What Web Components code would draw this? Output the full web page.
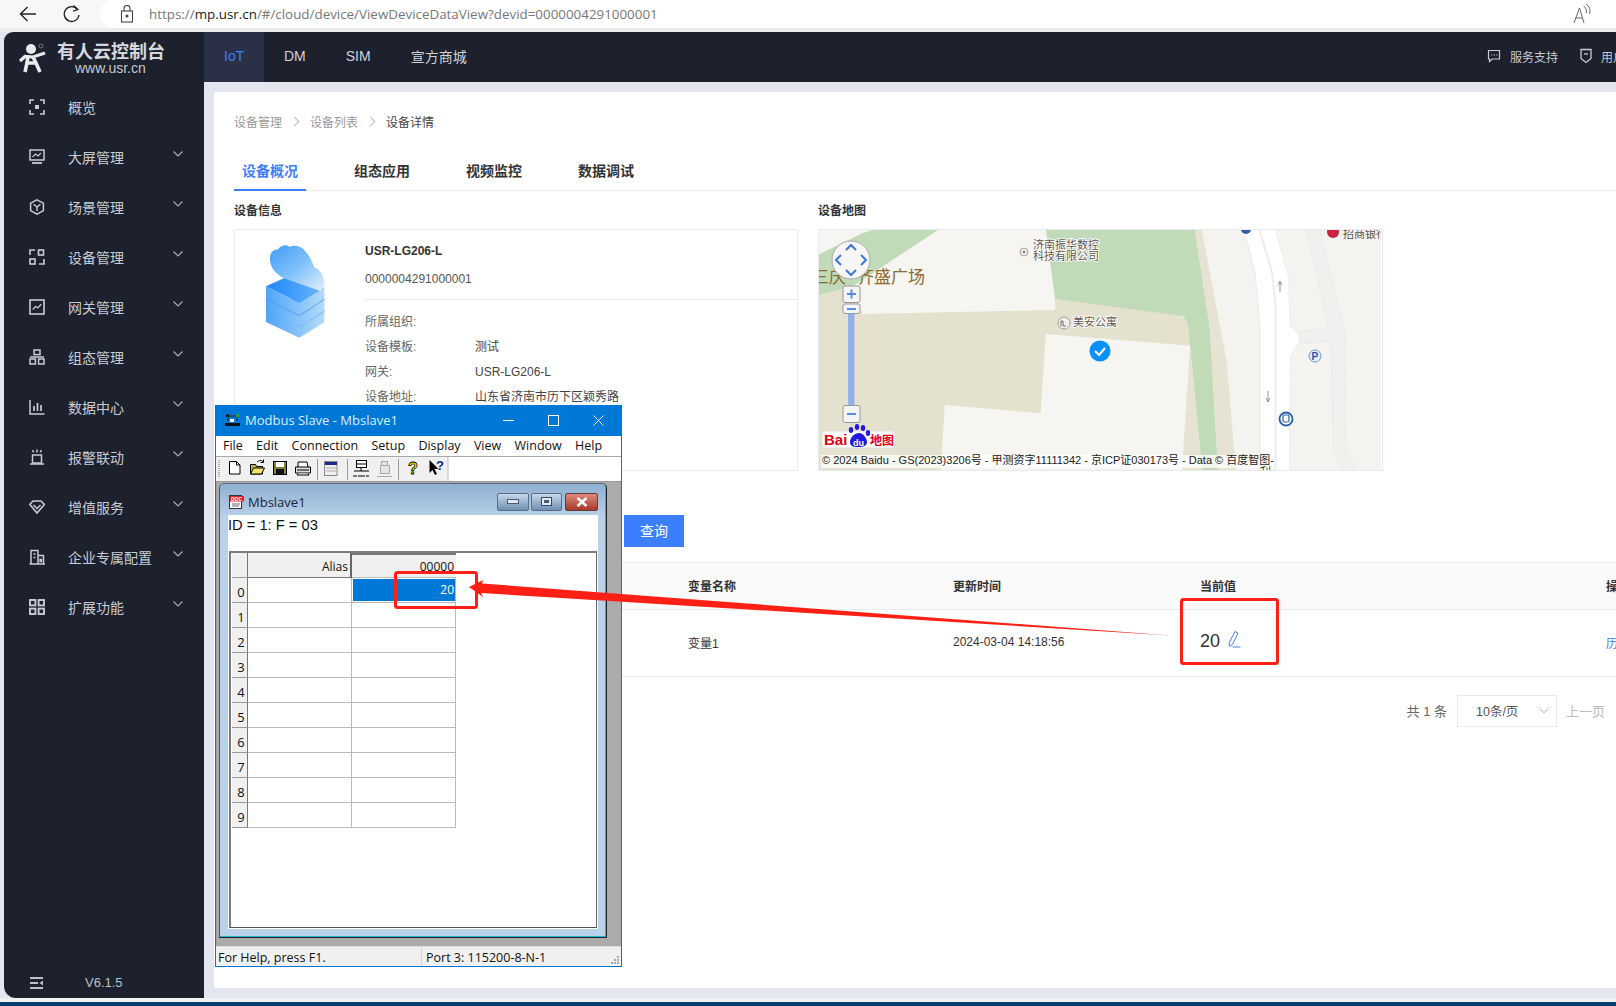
<!DOCTYPE html>
<html lang="zh"><head><meta charset="utf-8"><title>设备详情</title>
<style>
html,body{margin:0;padding:0;width:1616px;height:1006px;overflow:hidden;background:#e3e6ee;font-family:"Liberation Sans","Noto Sans CJK SC",sans-serif;font-size:12px;color:#333}
body{position:relative;display:flex;flex-direction:column}
</style></head><body>
<browser-bar></browser-bar>
<app-shell>
  <side-nav slot="nav">
    <nav-item icon="scan">概览</nav-item>
    <nav-item icon="screen" more>大屏管理</nav-item>
    <nav-item icon="hex" more>场景管理</nav-item>
    <nav-item icon="quad" more>设备管理</nav-item>
    <nav-item icon="gate" more>网关管理</nav-item>
    <nav-item icon="tree" more>组态管理</nav-item>
    <nav-item icon="bars" more>数据中心</nav-item>
    <nav-item icon="siren" more>报警联动</nav-item>
    <nav-item icon="gem" more>增值服务</nav-item>
    <nav-item icon="build" more>企业专属配置</nav-item>
    <nav-item icon="apps" more>扩展功能</nav-item>
  </side-nav>
  <top-bar slot="top"></top-bar>
  <device-panel slot="main"></device-panel>
</app-shell>
<bottom-strip></bottom-strip>
<modbus-window></modbus-window>
<annotation-layer></annotation-layer>
<script>
function shadow(el,html){el.attachShadow({mode:'open'}).innerHTML=html;}
const ICONS={
scan:'<path d="M1 5V1h4M11 1h4v4M15 11v4h-4M5 15H1v-4" fill="none" stroke="currentColor" stroke-width="1.6"/><rect x="6" y="6" width="4" height="4" fill="currentColor"/>',
screen:'<rect x="1" y="1" width="14" height="10" fill="none" stroke="currentColor" stroke-width="1.5"/><path d="M3.5 8l3-3 2.5 2 3-3" fill="none" stroke="currentColor" stroke-width="1.1"/><path d="M3 14h10" stroke="currentColor" stroke-width="1.8"/>',
hex:'<path d="M8 .8l6.4 3.4v7.4L8 15.2 1.6 11.6V4.2z" fill="none" stroke="currentColor" stroke-width="1.5"/><path d="M4.6 5.2L8 8l3.4-2.8M8 8v4" fill="none" stroke="currentColor" stroke-width="1.4"/>',
quad:'<path d="M6 1H1v5" fill="none" stroke="currentColor" stroke-width="1.6"/><rect x="9.5" y="1" width="5" height="5" fill="none" stroke="currentColor" stroke-width="1.6"/><rect x="1" y="10" width="5" height="5" fill="none" stroke="currentColor" stroke-width="1.6"/><path d="M15 10v5h-5" fill="none" stroke="currentColor" stroke-width="1.6"/>',
gate:'<rect x="1" y="1" width="14" height="14" fill="none" stroke="currentColor" stroke-width="1.6"/><path d="M3.8 10.5l3-3.2 2 1.6 3.400-3.600" fill="none" stroke="currentColor" stroke-width="1.3"/>',
tree:'<rect x="5" y="1" width="6" height="4.6" fill="none" stroke="currentColor" stroke-width="1.5"/><rect x="1" y="10" width="5.4" height="5" fill="none" stroke="currentColor" stroke-width="1.5"/><rect x="9.6" y="10" width="5.4" height="5" fill="none" stroke="currentColor" stroke-width="1.5"/><path d="M1 8h14" stroke="currentColor" stroke-width="1.5"/>',
bars:'<path d="M1 1v14h14.5" fill="none" stroke="currentColor" stroke-width="1.5"/><path d="M5 7v5M8.5 4v8M12 6v6" stroke="currentColor" stroke-width="1.7"/>',
siren:'<rect x="3.5" y="6" width="9" height="8" fill="none" stroke="currentColor" stroke-width="1.5"/><path d="M1 15h14M8 .5v3M3.500 1l1.200 2.400M12.500 1l-1.200 2.400" fill="none" stroke="currentColor" stroke-width="1.5"/>',
gem:'<path d="M.8 5.500L4 2h8l3.400 3.500L8 14z" fill="none" stroke="currentColor" stroke-width="1.6"/><path d="M4.500 6L8 9.500 11.500 6" fill="none" stroke="currentColor" stroke-width="1.5"/>',
build:'<path d="M2 15V1.500h7V15M9 6.500h5.500V15M0.500 15h16" fill="none" stroke="currentColor" stroke-width="1.5"/><path d="M4.500 5h2M4.500 8.500h2M11 10.500h1.500v2H11z" fill="none" stroke="currentColor" stroke-width="1.3"/>',
apps:'<g fill="none" stroke="currentColor" stroke-width="1.9"><rect x="1" y="1" width="5.400" height="5.400"/><rect x="9.600" y="1" width="5.400" height="5.400"/><rect x="1" y="9.600" width="5.400" height="5.400"/><rect x="9.600" y="9.600" width="5.400" height="5.400"/></g>'
};
customElements.define('browser-bar',class extends HTMLElement{constructor(){super();shadow(this,`<style>
:host{display:flex;height:32px;box-sizing:border-box;border-bottom:4px solid #ececec;background:#f7f7f7;align-items:center;flex:none}
.nav{width:100px;display:flex;flex:none;padding-left:18px;box-sizing:border-box;gap:22px;color:#333}
svg{display:block}
.url{flex:1;height:28px;background:#fff;border-radius:14px 0 0 14px;display:flex;align-items:center;font:13.380px "Open Sans",sans-serif;color:#777;padding-left:20px;white-space:nowrap;box-sizing:border-box}
.url b{font-weight:400;color:#222}.url svg{margin-right:15px}
.a{position:relative;margin-left:auto;margin-right:24px !important}
</style><div class="nav">
<svg width="20" height="20" viewBox="0 0 20 20" fill="none" stroke="#222" stroke-width="1.4"><path d="M18 10H2.500M9.500 3l-7 7 7 7"/></svg>
<svg width="20" height="20" viewBox="0 0 20 20" fill="none" stroke="#222" stroke-width="1.3" style="margin-left:2px"><path d="M15.500 5.500A7.400 7.400 0 1 0 17 11"/><path d="M11.500 1.500l4.300 4-4.600 1.600" /></svg></div>
<div class="url"><svg width="14" height="18" viewBox="0 0 14 18" fill="none" stroke="#444" stroke-width="1.1"><rect x="1.500" y="6" width="11" height="11"/><path d="M4 6V3.500a3 3 0 0 1 6 0V6"/><circle cx="7" cy="11" r="1" fill="#444"/></svg><span>https://<b>mp.usr.cn</b>/#/cloud/device/ViewDeviceDataView?devid=0000004291000001</span>
<svg class="a" width="20" height="22" viewBox="0 0 20 22" fill="none" stroke="#666" stroke-width="1"><path d="M2 20L7.500 5 12 20M3.800 15h6.500"/><path d="M11.500 3c2.400 1.400 3.400 4 2.700 7M14 1c3.500 2.200 4.600 6 3.600 10"/></svg></div>`)}});

customElements.define('app-shell',class extends HTMLElement{constructor(){super();shadow(this,`<style>
:host{display:grid;flex:1;min-height:0;margin-left:4px;grid-template-columns:200px 1fr;grid-template-rows:50px 1fr;overflow:hidden}
.nav{grid-row:1/3;min-height:0;display:flex}.top{display:flex;min-width:0}.main{min-width:0;min-height:0;padding:10px 0 10px 10px;display:flex;overflow:hidden}
::slotted(*){flex:1;min-width:0}
</style><div class="nav"><slot name="nav"></slot></div><div class="top"><slot name="top"></slot></div><div class="main"><slot name="main"></slot></div>`)}});

customElements.define('side-nav',class extends HTMLElement{constructor(){super();shadow(this,`<style>
:host{display:flex;flex-direction:column;background:#1c212d;border-radius:9px 0 0 12px;color:#c6cad3;position:relative}
.logo{height:50px;display:flex;position:relative;flex:none}
.t{position:absolute;left:53px;top:9px;font-size:18px;font-weight:700;line-height:22px;color:#d5d8de;white-space:nowrap}
.u{position:absolute;left:71px;top:29px;font-size:14px;line-height:15px;color:#c6cad3;white-space:nowrap}
svg.man{position:absolute;left:14px;top:7px}
.foot{margin-top:auto;height:31px;display:flex;align-items:center;position:relative;color:#bcc0c9;font-size:13px}
.foot svg{margin-left:26px}.foot span{margin-left:42px}
.items{display:flex;flex-direction:column;}
</style><div class="logo"><svg class="man" width="36" height="36" viewBox="0 0 36 36"><circle cx="13" cy="10" r="5" fill="#e8eaee"/><path d="M2 22l5-4.500 8 .5 12-4" fill="none" stroke="#e8eaee" stroke-width="3.200"/><path d="M10 17l-1 7-2 9M15 18l3 6 4 9M8 24h10" fill="none" stroke="#e8eaee" stroke-width="3.600"/><circle cx="23" cy="7" r="2" fill="none" stroke="#aaa" stroke-width=".6"/></svg>
<div class="t">有人云控制台</div><div class="u">www.usr.cn</div></div>
<div class="items"><slot></slot></div>
<div class="foot"><svg width="13" height="12" viewBox="0 0 13 12" fill="#bcc0c9"><rect width="13" height="2"/><rect y="5" width="8" height="2"/><rect y="10" width="13" height="2"/><path d="M13 3.500v5L9.500 6z"/></svg><span>V6.1.5</span></div>`)}});

customElements.define('nav-item',class extends HTMLElement{constructor(){super();
const ic=ICONS[this.getAttribute('icon')]||'';const more=this.hasAttribute('more');
shadow(this,`<style>
:host{display:flex;height:50px;align-items:center;font-size:14px;color:#c9ccd4;position:relative}
.i{margin-left:25px;width:16px;height:16px;display:block;color:#c9ccd4;flex:none}
.l{margin-left:23px;flex:1;white-space:nowrap}
.c{width:12px;height:8px;margin-right:20px;margin-top:-6px;flex:none}
</style><svg class="i" viewBox="0 0 16 16">${ic}</svg><div class="l"><slot></slot></div>${more?'<svg class="c" viewBox="0 0 12 8" fill="none" stroke="#aab0bb" stroke-width="1.1"><path d="M1.500 1.500L6 6l4.500-4.500"/></svg>':''}`)}});

customElements.define('top-bar',class extends HTMLElement{constructor(){super();shadow(this,`<style>
:host{display:flex;background:#1c212d;color:#d0d3da;font-size:14px;align-items:stretch;white-space:nowrap;overflow:hidden}
.t{display:flex;align-items:center;padding:0 20px 2px 20px}.t.on{background:#2a3146;color:#3d7eff;width:60px;box-sizing:border-box;flex:none}
.r{margin-left:auto;display:flex;align-items:center;font-size:12px;color:#c9ccd4;width:129px;flex:none;padding-bottom:2px;box-sizing:border-box}
.r svg{display:block;flex:none}
</style><div class="t on">IoT</div><div class="t">DM</div><div class="t">SIM</div><div class="t">宣方商城</div>
<div class="r"><svg width="14" height="14" viewBox="0 0 14 14" fill="none" stroke="#c9ccd4" stroke-width="1.2"><path d="M1.500 1.500h11v8.500H5L2.500 12.500V10h-1z"/><path d="M4.500 6h.8M7 6h.8M9.500 6h.8" stroke-width="1.300"/></svg><span style="margin-left:9px">服务支持</span><svg style="margin-left:21px" width="14" height="16" viewBox="0 0 14 16" fill="none" stroke="#c9ccd4" stroke-width="1.300"><path d="M2 1.500h10v9L7 14.500 2 10.500z"/><path d="M5 6h4"/></svg><span style="margin-left:8px">用户中心</span></div>`)}});

customElements.define('device-panel',class extends HTMLElement{constructor(){super();shadow(this,`<style>
:host{display:flex;flex-direction:column;background:#fff;padding:21px 0 0 20px;font-size:12px;color:#333;min-width:0;overflow:hidden;box-sizing:border-box}
.crumb{display:flex;align-items:center;height:16px;color:#9a9a9a;flex:none;white-space:nowrap}
.crumb i{width:6px;height:6px;border:solid #bbb;border-width:1px 1px 0 0;transform:rotate(45deg);margin:0 12px 0 9px;display:block}
.crumb b{font-weight:400;color:#444}
.tabs{display:flex;height:39px;margin-top:23px;box-sizing:border-box;border-bottom:1px solid #e8eaf0;font-size:14px;font-weight:700;color:#333;flex:none}
.tabs span{line-height:38px;white-space:nowrap;box-sizing:border-box}
.tabs span.on{padding:0 8px;color:#3d7eff;border-bottom:2px solid #3d7eff;margin-right:48px;height:39px;width:72px}
.tabs span:not(.on){margin-right:56px}
.cols{display:grid;grid-template-columns:564px 564px;column-gap:21px;margin-top:11px;flex:none}
h4{margin:0 0 10px;padding-top:1px;font-size:12px;line-height:16px;font-weight:700;color:#333}
.query{margin:44px 0 0 390px;width:60px;height:32px;padding-bottom:2px;box-sizing:border-box;background:#3d7eff;color:#fff;display:flex;align-items:center;justify-content:center;font-size:14px;flex:none}
</style>
<div class="crumb"><span>设备管理</span><i></i><span>设备列表</span><i></i><b>设备详情</b></div>
<div class="tabs"><span class="on">设备概况</span><span>组态应用</span><span>视频监控</span><span>数据调试</span></div>
<div class="cols"><div><h4>设备信息</h4><info-card></info-card></div><div style="margin-left:-1px"><h4>设备地图</h4><map-card></map-card></div></div>
<div class="query">查询</div>
<var-table></var-table>`)}});

customElements.define('info-card',class extends HTMLElement{constructor(){super();shadow(this,`<style>
:host{display:flex;height:242px;box-sizing:border-box;border:1px solid #e8eaf0;border-right:1px solid #e8eaf0;font-size:12px;color:#555;overflow:hidden}
.pic{width:130px;flex:none;padding:9px 0 0 21px;box-sizing:border-box}.pic svg{display:block}
.b{flex:1;display:flex;flex-direction:column}
.n{font-weight:700;color:#333;margin-top:13px;line-height:16px}
.s{margin-top:12px;line-height:16px;padding-bottom:12px;border-bottom:1px solid #e8eaf0}
.r{display:flex;line-height:16px;margin-top:9px;color:#666}.s + .r{margin-top:14px}.r span{width:110px}.r em{font-style:normal;color:#444}
</style><div class="pic"><svg width="80" height="100" viewBox="0 0 240 300"><defs>
<linearGradient id="c" x1="0" y1="0" x2="1" y2="1"><stop offset="0" stop-color="#3f9cf5"/><stop offset=".5" stop-color="#7fc0fa"/><stop offset="1" stop-color="#e3f1fd"/></linearGradient>
<linearGradient id="t" x1="0" y1="0" x2="1" y2="0"><stop offset="0" stop-color="#1f86fb"/><stop offset="1" stop-color="#6ab8fb"/></linearGradient>
<linearGradient id="l" x1="0" y1="0" x2="1" y2="0"><stop offset="0" stop-color="#4fa5f7"/><stop offset=".55" stop-color="#86c2fa"/><stop offset="1" stop-color="#b5dafc"/></linearGradient></defs>
<path d="M30 215v34l100 47 75-46v-35z" fill="url(#l)"/><path d="M30 215l100 47 75-47" fill="none" stroke="#3f95f2" stroke-width="4"/>
<path d="M30 180v36l100 48 75-48v-36z" fill="url(#l)"/><path d="M30 180l100 49 75-49" fill="none" stroke="#3f95f2" stroke-width="4"/>
<path d="M30 142v38l100 49 75-49v-33L130 192z" fill="url(#l)"/>
<path d="M30 142L112 105 205 147 130 192z" fill="url(#t)"/>
<path d="M84 118C60 105 40 85 42 55 44 35 58 30 66 32 72 20 90 14 102 24 116 14 142 24 150 40 165 55 170 75 176 86 195 90 208 120 205 142L193 156z" fill="url(#c)"/>
<g fill="#5fe08f"><circle cx="135" cy="205" r="2"/><circle cx="151" cy="196" r="2"/><circle cx="135" cy="237" r="2"/><circle cx="135" cy="271" r="2"/><circle cx="151" cy="263" r="2"/></g></svg></div>
<div class="b"><div class="n">USR-LG206-L</div><div class="s">0000004291000001</div>
<div class="r"><span>所属组织:</span><em></em></div><div class="r"><span>设备模板:</span><em>测试</em></div><div class="r"><span>网关:</span><em>USR-LG206-L</em></div><div class="r"><span>设备地址:</span><em>山东省济南市历下区颖秀路</em></div></div>`)}});

customElements.define('map-card',class extends HTMLElement{constructor(){super();shadow(this,`<style>
:host{display:block;height:242px;box-sizing:border-box;border:1px solid #e8eaf0;overflow:hidden}
svg{display:block}
text{font-family:"Liberation Sans","Noto Sans CJK SC",sans-serif}
.h{paint-order:stroke;stroke:#fff;stroke-width:1.600px}
</style><svg width="562" height="240" viewBox="819 230 562 240">
<rect x="819" y="230" width="564" height="240" fill="#f6f5f1"/>
<g transform="translate(800 0) scale(.5208 .3333)">
<path d="M36 885L100 860 120 942 490 930 490 897 725 940 745 965 750 1037 472 1002 462 1240 278 1215 270 1410 30 1410 30 885z" fill="#e4e1cf"/>
<path d="M30 768L120 700 140 690 265 690 100 860 30 888z" fill="#c1dbb8"/>
</g>
<path d="M1046 230H1195L1210 329 1218 470H1202L1190 346 1188 324 1183 316 1055 299z" fill="#c1dbb8"/>
<path d="M1195 230H1202L1227 362 1236 470H1218L1210 329z" fill="#e6e3d2"/>
<path d="M1190 346L1202 470H1182z" fill="#e6e3d2"/>
<path d="M1202 230H1382V470H1236L1227 362z" fill="#f4f3ef"/>
<g transform="translate(1160 229) scale(.3333)">
<path d="M440 0H478L555 310 558 660 590 725H550L520 665 515 355 500 338 418 345 415 310 505 295z" fill="#f0f0ef" stroke="#e6e6e4" stroke-width="2"/>
<path d="M252 0H295L335 130 345 230V726H300V290L285 130z" fill="#fff" stroke="#e4e4e2" stroke-width="2"/>
<path d="M300 0H345L385 140 390 290 418 318V340L392 380 388 726H348V230L338 130z" fill="#fff" stroke="#e8e8e6" stroke-width="2"/>
</g>
<path d="M1280 281v11M1278 285l2-4 2 4" stroke="#888" fill="none" stroke-width=".9"/>
<path d="M1268 391v11M1266 398l2 4 2-4" stroke="#888" fill="none" stroke-width=".9"/>
<text x="812" y="283" font-size="17" fill="#8a6a2e">三庆</text><text x="857" y="283" font-size="17" fill="#8a6a2e">齐盛广场</text>
<circle cx="1024" cy="252" r="4" fill="#eee" stroke="#a89e96"/><circle cx="1024" cy="252" r="1.300" fill="#8a7a70"/>
<text class="h" x="1033" y="249" font-size="11" fill="#5f5450">济南振华数控</text><text class="h" x="1033" y="260" font-size="11" fill="#5f5450">科技有限公司</text>
<circle cx="1064" cy="323" r="6" fill="#eee" stroke="#a89e96"/><path d="M1061 326v-5h2v5h3" fill="none" stroke="#7e6a66"/><text class="h" x="1073" y="326" font-size="11" fill="#5f5450">美安公寓</text>
<circle cx="1100" cy="351" r="10.500" fill="#0a90fb"/><path d="M1095 351l4 4 6-7" fill="none" stroke="#fff" stroke-width="2"/>
<circle cx="1315" cy="356" r="6" fill="#e6edf8" stroke="#6f96cc"/><text x="1311.500" y="360" font-size="10" font-weight="700" fill="#1f56a5">P</text>
<circle cx="1286" cy="419" r="6.500" fill="#fff" stroke="#2a5fa8" stroke-width="1.800"/><rect x="1283" y="415" width="6" height="7" rx="1.500" fill="none" stroke="#2a5fa8" stroke-width="1.200"/>
<circle cx="1333" cy="232" r="6" fill="#c8233f"/><text x="1343" y="238" font-size="11" fill="#5f5450">招商银行</text><circle cx="1246" cy="229" r="5" fill="#2a5fa8"/>
<rect x="821" y="455" width="453" height="13" fill="#fff" opacity=".75"/>
<text x="822" y="464" font-size="11" fill="#222">© 2024 Baidu - GS(2023)3206号 - 甲测资字11111342 - 京ICP证030173号 - Data © 百度智图-</text>
<text x="1260" y="476" font-size="11" fill="#222">利</text>
<circle cx="851" cy="260" r="19" fill="#f6f6f6" stroke="#aaa"/>
<g fill="none" stroke="#3f78dd" stroke-width="2"><path d="M846 250l5-5 5 5M846 270l5 5 5-5M841 255l-5 5 5 5M861 255l5 5-5 5"/></g>
<g fill="#f4f4f4" stroke="#999"><rect x="843" y="286" width="17" height="16.500" rx="2"/><rect x="843" y="304" width="17" height="9.500" rx="2"/></g>
<rect x="848.500" y="313.500" width="5.500" height="92" fill="#8fb2ee" stroke="#7a9de0" stroke-width=".5"/>
<rect x="843" y="405.500" width="17" height="17" rx="2" fill="#f4f4f4" stroke="#999"/>
<path d="M847 294h9M851.500 289.500v9M847 309h9M847 414h9" stroke="#5a8ae8" stroke-width="2"/>
<rect x="822" y="431" width="73" height="17" rx="3" fill="#fff" stroke="#ddd"/>
<text x="824" y="445" font-size="15" font-weight="700" fill="#e60012">Bai</text>
<g fill="#2319dc"><ellipse cx="851" cy="430" rx="2.200" ry="3"/><ellipse cx="857" cy="427" rx="2.200" ry="3"/><ellipse cx="863" cy="428" rx="2.200" ry="3"/><ellipse cx="868" cy="433" rx="2.200" ry="3"/><path d="M859 433c4 0 8 5 8 9s-4 5-8 5-9 0-9-5 5-9 9-9z"/></g>
<text x="853" y="446" font-size="9" font-weight="700" fill="#fff">du</text>
<text x="870" y="445" font-size="12" font-weight="700" fill="#e60012">地图</text>
</svg>`)}});

customElements.define('var-table',class extends HTMLElement{constructor(){super();shadow(this,`<style>
:host{display:block;margin-top:15px;width:1382px;font-size:12px;flex:none}
.g{display:grid;grid-template-columns:454px 265px 247px 406px 10px;white-space:nowrap;overflow:hidden}
.h,.d{display:flex;align-items:center;box-sizing:border-box}
.h{height:48px;background:#fafafa;border-top:1px solid #e8eaf0;border-bottom:1px solid #e8eaf0;font-weight:700;color:#333;padding-bottom:2px}
.d{height:67px;border-bottom:1px solid #e8eaf0;color:#333;padding-bottom:2px}
.v{font-size:18px;margin-top:-2px}.v svg{margin-left:6px;vertical-align:-1px}
.a{color:#3d7eff}
.page{display:flex;justify-content:flex-end;align-items:center;margin-top:18px;padding-right:11px;height:32px;white-space:nowrap;font-size:13px;color:#666}
.page > span{margin-top:-2px}
.sel{width:100px;height:32px;border:1px solid #e8eaf0;box-sizing:border-box;margin:0 9px 0 10px;display:flex;align-items:center;padding:0 0 1px 18px;font-size:12.500px;position:relative;color:#555}
.sel svg{position:absolute;right:7px;top:12px}
.pv{color:#bbb;font-size:13px}
</style><div class="g"><div class="h"></div><div class="h">变量名称</div><div class="h">更新时间</div><div class="h">当前值</div><div class="h">操作</div>
<div class="d"></div><div class="d">变量1</div><div class="d">2024-03-04 14:18:56</div><div class="d"><span class="v">20<svg width="16" height="17" viewBox="0 0 16 17" fill="none" stroke="#4a7ef5" stroke-width="1"><path d="M9 .5l3 1.500-5.500 11.500-3 2-.5-3.500zM6.500 16h8"/></svg></span></div><div class="d a">历史</div></div>
<div class="page"><span>共 1 条</span><div class="sel">10条/页<svg width="10" height="6" viewBox="0 0 10 6" fill="none" stroke="#bbb"><path d="M1 1l4 4 4-4"/></svg></div><span class="pv">上一页</span></div>`)}});

customElements.define('modbus-window',class extends HTMLElement{constructor(){super();
const F='"Open Sans","Noto Sans",sans-serif';
let cells='<div class="c rh"></div><div class="c rh al">Alias</div><div class="c rh n">00000</div>';
for(let i=0;i<10;i++){cells+=`<div class="c rh num">${i}</div><div class="c"></div><div class="c v">${i==0?'<span class="sel">20</span>':''}</div>`;}
shadow(this,`<style>
:host{position:absolute;left:215px;top:405px;width:407px;height:562px;box-sizing:border-box;border:1px solid #0078d7;background:#f0f0f0;display:flex;flex-direction:column;font:12px ${F};color:#111;z-index:5}
.title{height:30px;padding-bottom:2px;box-sizing:border-box;flex:none;background:#0078d7;color:#dceeff;display:flex;align-items:center;padding-left:9px;font-size:13px;white-space:nowrap}
.title svg{display:block}.title span{margin-left:5px;flex:1}
.title .b{width:45px;height:30px;display:flex;align-items:center;justify-content:center}
.menu{flex:none;background:#fff;display:flex;align-items:center;font-size:12.500px;padding:0 0 2px 7px;box-sizing:content-box;height:18px;gap:13.300px;border-bottom:1px solid #a8a8a8;white-space:nowrap}
.tool{height:24px;flex:none;background:#fff;border-bottom:1px solid #9a9a9a}
.tool svg{display:block}
.mdi{flex:1;background:#ababab;padding:1px 14px 8px 2px;min-height:0;display:flex;border-left:1px solid #a0a0a0}
.child{flex:1;min-width:0;box-sizing:border-box;border:1px solid #222;border-top-color:#5d6c7c;border-radius:5px 5px 0 0;border-left-color:#555;background:#b9d1ea;box-shadow:inset -1px -1px 0 #1fb6d6;display:flex;flex-direction:column;padding:0 8px 8px 8px;background-image:linear-gradient(#8fb0d2,#bad1ea 34px)}
.ct{height:31px;flex:none;display:flex;align-items:center;padding:5px 0 0 1px;box-sizing:border-box;color:#15263a;font-size:13px}
.ct span{margin-left:3px;flex:1}.ct svg{display:block}
.btn{height:18px;border:1px solid #5a6e86;border-radius:2px;background:linear-gradient(#c6d8ec,#6f8fb3);display:flex;align-items:center;justify-content:center;box-sizing:border-box;flex:none}
.client{flex:1;background:#fff;display:flex;flex-direction:column;min-height:0}
.id{height:36px;flex:none;font:14.700px "Liberation Sans",sans-serif;padding:1px 0 0 0;line-height:18px;color:#111;box-sizing:border-box}
.wrap{flex:1;margin:0 1px 1px;border:2px solid #7c7c7c;border-right:1px solid #666;border-bottom:1px solid #555;outline:1px solid #fff;min-height:0;padding-left:1px;background:#fff}
.grid{display:grid;grid-template-columns:16px 104px 104px;grid-auto-rows:25px;width:224px}
.c{box-sizing:border-box;border-right:1px solid #bababa;border-bottom:1px solid #bababa;text-align:right;line-height:24px;font-size:12px;padding-right:2px;position:relative}
.rh{background:#f0f0f0;border-right:1px solid #777;border-bottom-color:#999}
.al{border-right:2px solid #666;border-bottom:1px solid #777;line-height:27px}
.n{border-right:0;border-bottom-color:#bababa;border-top:2px solid #777;line-height:24px}
.num{font-size:13px;text-align:center;padding:2px 0 0 3px}
.sel{position:absolute;left:1px;top:1px;right:0;bottom:1px;background:#0078d7;color:#fff;line-height:22px;padding-right:1px}
.status{height:20px;flex:none;background:#f0f0f0;border-top:1px solid #dcdcdc;display:flex;align-items:center;font-size:12.500px;position:relative;box-sizing:border-box}
.status .a{width:206px;padding-left:2px;border-right:1px solid #d4d4d4;box-sizing:border-box;height:100%;line-height:21px;white-space:nowrap}
.status .p{padding-left:4px;white-space:nowrap;line-height:21px;height:100%}
.status svg{position:absolute;right:1px;bottom:1px}
</style>
<div class="title"><svg width="15" height="14" viewBox="0 0 15 14"><path d="M3 3h9M3 3v5M12 3v5M1 11h13" stroke="#222" fill="none"/><rect x="1" y="1" width="3" height="3" fill="#123"/><rect x="11" y="1" width="3" height="3" fill="#2ba04a"/><rect x="5" y="6" width="4" height="3" fill="#fff"/><rect y="10" width="15" height="3" fill="#111"/></svg><span>Modbus Slave - Mbslave1</span>
<div class="b"><svg width="11" height="11"><path d="M0 5.500h11" stroke="#fff"/></svg></div><div class="b"><svg width="11" height="11"><rect x=".5" y=".5" width="10" height="10" fill="none" stroke="#fff"/></svg></div><div class="b"><svg width="11" height="11"><path d="M.5.5l10 10M10.500.5l-10 10" stroke="#fff"/></svg></div></div>
<div class="menu"><span>File</span><span>Edit</span><span>Connection</span><span>Setup</span><span>Display</span><span>View</span><span>Window</span><span>Help</span></div>
<div class="tool"><svg width="405" height="24" viewBox="216 457 405 24">
<rect x="216" y="457" width="232" height="24" fill="#f0f0f0"/><path d="M448 457v24" stroke="#bbb"/>
<path d="M219 460v18" stroke="#aaa" stroke-dasharray="1 1" stroke-width="2"/>
<path d="M229.500 461.500h7l3.500 3.500v9h-10.500z" fill="#fff" stroke="#000"/><path d="M236.500 461.500v3.500h3.500" fill="none" stroke="#000"/>
<path d="M250.500 464.500h5l1 2h6v7.500h-12z" fill="#c8b34a" stroke="#000"/><path d="M250.500 474l3-6h11l-3 6z" fill="#f3e26a" stroke="#000"/><path d="M257 462c2-2 5-2 6 0M263.500 459.500v3h-3" fill="none" stroke="#000"/>
<rect x="273.500" y="461.500" width="13" height="13" fill="#807c3c" stroke="#000"/><rect x="276" y="462" width="8" height="5" fill="#fff"/><rect x="276" y="469" width="8" height="5" fill="#111"/>
<path d="M298 467v-5h9l1 5" fill="#fff" stroke="#000"/><path d="M295.500 467h15v6h-15z" fill="#ddd" stroke="#000"/><path d="M297 470h12M298 473.500l-1 1.500h12l-1-1.500" fill="#fff" stroke="#000"/>
<path d="M317.500 459v21M347.500 459v21M398.500 459v21" stroke="#9a9a9a"/>
<rect x="324.500" y="461.500" width="12.500" height="14" fill="#f0f0f0" stroke="#888"/><rect x="325" y="462" width="12" height="3" fill="#1a2a8a"/><path d="M326 468h10M326 471h10" stroke="#aaa"/>
<rect x="356.500" y="460.500" width="10" height="7" fill="#fff" stroke="#000"/><path d="M357 464h9M361 468v3M354 471h15M353 476h4M358 476h7M366 476h3" stroke="#000"/>
<g stroke="#a8a8a8" fill="#e4e4e4"><rect x="381.500" y="461.500" width="6" height="4"/><rect x="380.500" y="465.500" width="9" height="8"/><path d="M377 476.500h15" /></g>
<text x="408" y="474" font-size="16" font-weight="700" font-family="Liberation Sans" fill="#ff0" stroke="#000" stroke-width=".8">?</text>
<path d="M429.500 460l0 13 3-3 2.500 5 2-1-2.500-5h4z" fill="#000"/><text x="436" y="470" font-size="13" font-weight="700" font-family="Liberation Sans" fill="#0a2a8a">?</text>
</svg></div>
<div class="mdi"><div class="child"><div class="ct"><svg width="16" height="15" viewBox="0 0 16 15"><rect x=".5" y=".5" width="12" height="13" fill="#fff" stroke="#333"/><rect x="1" y="1" width="14" height="5.500" fill="#d22"/><text x="2" y="5.800" font-size="5" font-weight="700" font-family="Liberation Sans" fill="#fff">DOC</text><path d="M3 9h8M3 11h7" stroke="#666"/></svg><span>Mbslave1</span>
<div class="btn" style="width:32px;margin-right:2px"><svg width="12" height="6"><rect x=".5" y=".5" width="11" height="4" fill="#dfe8f3" stroke="#4a5a70"/></svg></div><div class="btn" style="width:31px;margin-right:3px"><svg width="12" height="10"><rect x=".5" y=".5" width="10" height="8" fill="#dfe8f3" stroke="#3a4a60"/><rect x="3" y="3" width="5" height="3" fill="#4a5a70"/></svg></div><div class="btn" style="width:33px;background:linear-gradient(#dd8a7e,#a8392c);border-color:#6a3a34"><svg width="12" height="10"><path d="M1.500 1l9 8M10.500 1l-9 8" stroke="#fff" stroke-width="2.400"/></svg></div></div>
<div class="client"><div class="id">ID = 1: F = 03</div><div class="wrap"><div class="grid">${cells}</div></div></div></div></div>
<div class="status"><div class="a">For Help, press F1.</div><div class="p">Port 3: 115200-8-N-1</div><svg width="10" height="10" fill="#aaa"><rect x="7" y="1" width="2" height="2"/><rect x="4" y="4" width="2" height="2"/><rect x="7" y="4" width="2" height="2"/><rect x="1" y="7" width="2" height="2"/><rect x="4" y="7" width="2" height="2"/><rect x="7" y="7" width="2" height="2"/></svg></div>`)}});

customElements.define('annotation-layer',class extends HTMLElement{constructor(){super();shadow(this,`<style>
:host{position:absolute;left:0;top:0;width:1616px;height:1006px;z-index:9;pointer-events:none}
svg{display:block}
</style><svg width="1616" height="1006" viewBox="0 0 1616 1006">
<g fill="none" stroke="#ff2015" stroke-width="3"><rect x="395.500" y="572.500" width="81" height="35" rx="2"/><rect x="1181.500" y="599.500" width="96" height="64" rx="2"/></g>
<path d="M469 587L483 580 482 583.500 1170 635.500 481 593 483 597z" fill="#ff2015"/>
</svg>`)}});

customElements.define('bottom-strip',class extends HTMLElement{constructor(){super();shadow(this,`<style>
:host{display:block;flex:none;height:8px;background:#f0f1f3;border-bottom:4px solid #003f6e;box-sizing:border-box}
</style>`)}});
</script>
</body></html>
